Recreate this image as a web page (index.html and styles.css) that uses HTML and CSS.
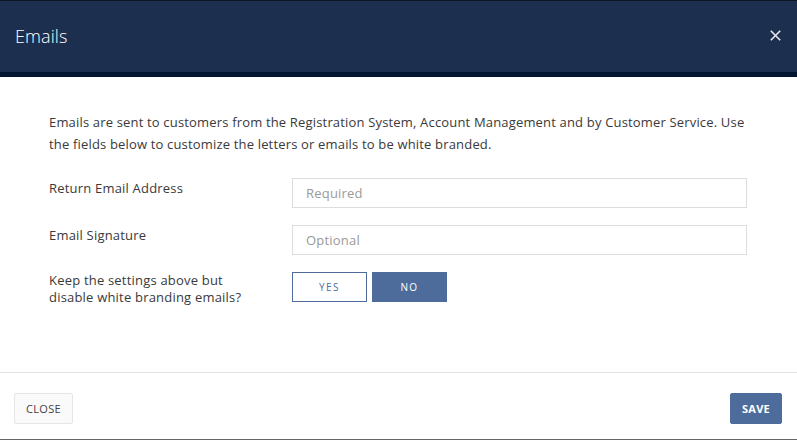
FILE: index.html
```html
<!DOCTYPE html>
<html lang="en">
<head>
<meta charset="utf-8">
<title>Emails</title>
<link rel="stylesheet" href="styles.css">
</head>
<body>
<div class="modal">
  <header class="modal-header">
    <h1 class="modal-title">Emails</h1>
    <button class="close-x" aria-label="Close">
      <svg width="11" height="11" viewBox="0 0 11 11"><path d="M0.8 0.8 L10.2 10.2 M10.2 0.8 L0.8 10.2" stroke="#e6e9ef" stroke-width="1.6" fill="none"/></svg>
    </button>
  </header>
  <main class="modal-body">
    <p class="intro">Emails are sent to customers from the Registration System, Account Management and by Customer Service. Use the fields below to customize the letters or emails to be white branded.</p>
    <div class="form-row">
      <label class="label label-one">Return Email Address</label>
      <input class="field" type="text" placeholder="Required">
    </div>
    <div class="form-row">
      <label class="label label-one">Email Signature</label>
      <input class="field" type="text" placeholder="Optional">
    </div>
    <div class="form-row">
      <label class="label">Keep the settings above but<br>disable white branding emails?</label>
      <div class="toggle">
        <button class="tbtn tbtn-off">YES</button>
        <button class="tbtn tbtn-on">NO</button>
      </div>
    </div>
  </main>
  <footer class="modal-footer">
    <button class="btn btn-close">CLOSE</button>
    <button class="btn btn-save">SAVE</button>
  </footer>
</div>
</body>
</html>
```
FILE: styles.css
```css
html, body {
  margin: 0;
  padding: 0;
  background: #ffffff;
}
body {
  font-family: "Open Sans", "Liberation Sans", sans-serif;
  color: #333333;
  width: 797px;
  height: 440px;
  overflow: hidden;
}
.modal {
  display: flex;
  flex-direction: column;
  height: 440px;
  box-sizing: border-box;
  border-bottom: 1px solid #666666;
}
.modal-header {
  box-sizing: border-box;
  border-top: 1px solid #0e1626;
  background: #1c2f4f;
  border-bottom: 5px solid #03152f;
  height: 77px;
  display: flex;
  align-items: center;
  justify-content: space-between;
  padding: 0 16px 2px 15px;
}
.modal-title {
  margin: 0;
  font-size: 18px;
  font-weight: 300;
  color: #ffffff;
  letter-spacing: 0.1px;
}
.close-x {
  background: none;
  border: none;
  padding: 0;
  display: flex;
  width: 11px;
  height: 11px;
}
.modal-body {
  flex: 1;
  padding: 34px 48px 0 49px;
  border-bottom: 1px solid #e3e3e3;
}
.intro {
  margin: 0 0 23px;
  font-size: 13px;
  line-height: 22px;
  color: #3a3a3a;
  letter-spacing: 0.17px;
}
.form-row {
  display: flex;
  align-items: flex-start;
  margin-bottom: 17px;
}
.label {
  width: 243px;
  font-size: 13px;
  line-height: 17px;
  color: #3a3a3a;
  letter-spacing: 0.2px;
}
.label-one {
  padding-top: 2px;
}
.field {
  width: 455px;
  height: 30px;
  box-sizing: border-box;
  border: 1px solid #dddddd;
  padding: 0 13px;
  font-family: inherit;
  font-size: 13px;
  letter-spacing: 0.2px;
  color: #333;
  outline: none;
}
.field::placeholder {
  color: #9a9a9a;
}
.toggle {
  display: flex;
  gap: 5px;
}
.tbtn {
  width: 75px;
  height: 30px;
  box-sizing: border-box;
  font-family: inherit;
  font-size: 10px;
  letter-spacing: 1.4px;
  border: 1px solid #4e6c9b;
  padding: 0;
}
.tbtn-off {
  background: #ffffff;
  color: #4e6c9b;
}
.tbtn-on {
  background: #4e6c9b;
  color: #ffffff;
}
.modal-footer {
  height: 66px;
  display: flex;
  align-items: flex-start;
  justify-content: space-between;
  padding: 20px 15px 0 14px;
  box-sizing: border-box;
}
.btn {
  height: 31px;
  box-sizing: border-box;
  font-family: inherit;
  font-size: 11px;
  border-radius: 2px;
  padding: 0;
  letter-spacing: 0.3px;
}
.btn-close {
  background: #fafafa;
  border: 1px solid #e6e6e6;
  color: #444444;
  width: 59px;
}
.btn-save {
  background: #4e6c9b;
  border: 1px solid #4e6c9b;
  color: #ffffff;
  width: 52px;
  font-weight: 700;
}
```
